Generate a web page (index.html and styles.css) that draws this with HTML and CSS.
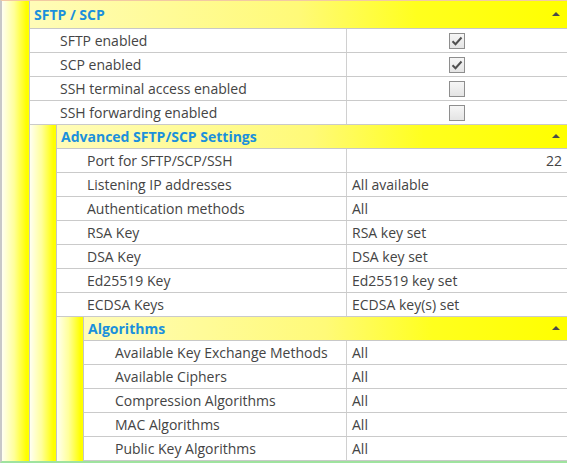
FILE: index.html
```html
<!DOCTYPE html>
<html>
<head>
<meta charset="utf-8">
<link rel="stylesheet" href="styles.css">
</head>
<body>
<div class="grid">
  <div class="group lvl1">
    <div class="band"></div>
    <div class="content">
      <div class="header top"><span class="htext">SFTP / SCP</span><span class="arrow"></span></div>
      <div class="row"><div class="label">SFTP enabled</div><div class="value center"><span class="cb"><svg width="14" height="14" viewBox="0 0 14 14"><path d="M2.5 7.2 L5.5 10.2 L11.5 3.5" fill="none" stroke="#505050" stroke-width="2"/></svg></span></div></div>
      <div class="row"><div class="label">SCP enabled</div><div class="value center"><span class="cb"><svg width="14" height="14" viewBox="0 0 14 14"><path d="M2.5 7.2 L5.5 10.2 L11.5 3.5" fill="none" stroke="#505050" stroke-width="2"/></svg></span></div></div>
      <div class="row"><div class="label">SSH terminal access enabled</div><div class="value center"><span class="cb"></span></div></div>
      <div class="row"><div class="label">SSH forwarding enabled</div><div class="value center"><span class="cb"></span></div></div>
      <div class="group lvl2">
        <div class="band"></div>
        <div class="content">
          <div class="header"><span class="htext">Advanced SFTP/SCP Settings</span><span class="arrow"></span></div>
          <div class="row"><div class="label">Port for SFTP/SCP/SSH</div><div class="value right">22</div></div>
          <div class="row"><div class="label">Listening IP addresses</div><div class="value">All available</div></div>
          <div class="row"><div class="label">Authentication methods</div><div class="value">All</div></div>
          <div class="row"><div class="label">RSA Key</div><div class="value">RSA key set</div></div>
          <div class="row"><div class="label">DSA Key</div><div class="value">DSA key set</div></div>
          <div class="row"><div class="label">Ed25519 Key</div><div class="value">Ed25519 key set</div></div>
          <div class="row"><div class="label">ECDSA Keys</div><div class="value">ECDSA key(s) set</div></div>
          <div class="group lvl3">
            <div class="band"></div>
            <div class="content">
              <div class="header"><span class="htext">Algorithms</span><span class="arrow"></span></div>
              <div class="row"><div class="label">Available Key Exchange Methods</div><div class="value">All</div></div>
              <div class="row"><div class="label">Available Ciphers</div><div class="value">All</div></div>
              <div class="row"><div class="label">Compression Algorithms</div><div class="value">All</div></div>
              <div class="row"><div class="label">MAC Algorithms</div><div class="value">All</div></div>
              <div class="row"><div class="label">Public Key Algorithms</div><div class="value">All</div></div>
            </div>
          </div>
        </div>
      </div>
    </div>
  </div>
</div>
</body>
</html>
```

FILE: styles.css
```css
html, body {
  margin: 0;
  padding: 0;
  background: #ffffff;
}
body {
  width: 567px;
  height: 463px;
  overflow: hidden;
  font-family: "Open Sans", "Noto Sans", sans-serif;
  font-size: 14px;
  color: #444444;
}
.grid {
  border-top: 1px solid #f2c9a2;
  border-left: 2px solid #c8c8c8;
  border-bottom: 2px solid #9fe39f;
}
.group {
  display: flex;
}
.band {
  flex: 0 0 auto;
  border-right: 1px solid #c4c4c4;
  background: linear-gradient(to right, #fffff2 0%, #ffff9a 45%, #ffff00 90%);
}
.lvl1 > .band { width: 27px; }
.lvl2 > .band { width: 26px; }
.lvl3 > .band { width: 26px; }
.content {
  flex: 1 1 auto;
  min-width: 0;
}
.header {
  height: 23px;
  border-bottom: 1px solid #c8c8c8;
  display: flex;
  align-items: center;
  padding-left: 4px;
  background: linear-gradient(to right, #fffcb8 0%, #fffa78 50%, #ffff1e 72%, #ffff00 100%);
  font-weight: bold;
  color: #1b90dc;
}
.header.top {
  height: 27px;
}
.htext {
  flex: 1 1 auto;
}
.arrow {
  width: 0;
  height: 0;
  border-left: 4px solid transparent;
  border-right: 4px solid transparent;
  border-bottom: 4px solid #4a4a4a;
  margin-right: 7px;
  margin-bottom: 1px;
}
.row {
  display: flex;
  height: 23px;
  border-bottom: 1px solid #cacaca;
}
.label {
  flex: 1 1 auto;
  padding-left: 30px;
  display: flex;
  align-items: center;
  white-space: nowrap;
  overflow: hidden;
}
.lvl3 .label { padding-left: 31px; }
.value {
  flex: 0 0 auto;
  width: 215px;
  border-left: 1px solid #d0d0d0;
  padding-left: 5px;
  display: flex;
  align-items: center;
  white-space: nowrap;
}
.value.center {
  justify-content: center;
  padding-left: 0;
  width: 220px;
}
.value.right {
  justify-content: flex-end;
  padding-left: 0;
  padding-right: 5px;
  width: 215px;
}
.cb {
  width: 14px;
  height: 14px;
  border: 1px solid #8e8e8e;
  background: linear-gradient(to bottom, #f6f6f6, #e4e4e4);
  display: flex;
  align-items: center;
  justify-content: center;
}
.cb svg {
  display: block;
}
```
